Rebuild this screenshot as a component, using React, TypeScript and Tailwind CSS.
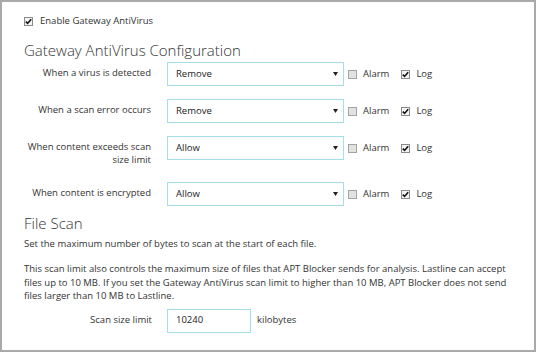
import React from "react";

const font = { fontFamily: '"Open Sans", "DejaVu Sans", sans-serif' };

function Box({ checked }: { checked?: boolean }) {
  if (checked) {
    return (
      <span className="flex h-[9px] w-[9px] shrink-0 items-center justify-center border border-[#8a8a8a] bg-[#f4f4f4]">
        <svg width="7" height="7" viewBox="0 0 7 7">
          <path d="M0.8 3.6 L2.6 5.4 L6.2 1.2" fill="none" stroke="#111" strokeWidth="1.6" />
        </svg>
      </span>
    );
  }
  return <span className="block h-[9px] w-[9px] shrink-0 border border-[#a3a3a3] bg-[#e2e2e2]" />;
}

function Row({ label, value }: { label: string; value: string }) {
  return (
    <div className="flex items-start">
      <div className="w-[127px] pb-[3px] pt-[4px] text-right leading-[13px]">{label}</div>
      <div className="ml-[16px] flex h-[24px] w-[177px] items-center justify-between border border-[#a4dce8] pl-[8px] pr-[5px] text-[#222]">
        <span>{value}</span>
        <svg width="5" height="4" viewBox="0 0 5 4">
          <path d="M0 0 H5 L2.5 4 Z" fill="#222" />
        </svg>
      </div>
      <div className="flex h-[24px] items-center">
        <span className="ml-[4px]">
          <Box />
        </span>
        <span className="ml-[6px]">Alarm</span>
        <span className="ml-[12px]">
          <Box checked />
        </span>
        <span className="ml-[6px]">Log</span>
      </div>
    </div>
  );
}

export default function App() {
  return (
    <div style={font} className="h-[353px] w-[536px] bg-white text-[9.5px] text-[#333]">
      <div className="h-[352px] w-[536px] border-2 border-[#a9a9a9] pl-[22px] pt-[12px]">
        <div className="flex h-[14px] items-center">
          <Box checked />
          <span className="ml-[7px]">Enable Gateway AntiVirus</span>
        </div>
        <div className="mt-[12px] text-[15px] font-light leading-[20px] text-[#333]">
          Gateway AntiVirus Configuration
        </div>
        <div className="mt-[2px] flex flex-col gap-[13px]">
          <Row label="When a virus is detected" value="Remove" />
          <Row label="When a scan error occurs" value="Remove" />
          <Row label="When content exceeds scan size limit" value="Allow" />
          <Row label="When content is encrypted" value="Allow" />
        </div>
        <div className="mt-[7px] text-[15px] font-light leading-[20px]">File Scan</div>
        <div className="mt-[4px] leading-[14px]">
          Set the maximum number of bytes to scan at the start of each file.
        </div>
        <div className="mt-[11px] w-[492px] leading-[13.5px]">
          This scan limit also controls the maximum size of files that APT Blocker sends for analysis. Lastline can accept
          files up to 10 MB. If you set the Gateway AntiVirus scan limit to higher than 10 MB, APT Blocker does not send
          files larger than 10 MB to Lastline.
        </div>
        <div className="mt-[6px] flex items-center">
          <div className="w-[128px] text-right">Scan size limit</div>
          <div className="ml-[15px] flex h-[24px] w-[84px] items-center border border-[#a4dce8] pl-[8px] text-[#222]">
            10240
          </div>
          <span className="ml-[6px]">kilobytes</span>
        </div>
      </div>
    </div>
  );
}
